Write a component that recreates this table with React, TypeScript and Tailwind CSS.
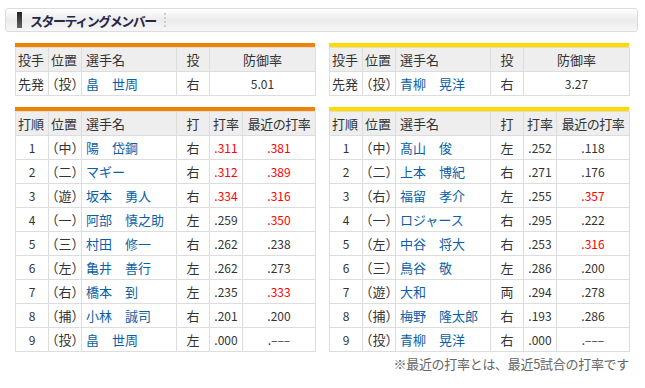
import React from "react";

type Pitcher = { role: string; pos: string; name: string; hand: string; era: string };
type Batter = { order: number; pos: string; name: string; hand: string; avg: string; recent: string; avgHot?: boolean; recentHot?: boolean };

const teams: { color: string; pitcher: Pitcher; lineup: Batter[] }[] = [
  {
    color: "bg-[#f08300]",
    pitcher: { role: "先発", pos: "（投）", name: "畠　世周", hand: "右", era: "5.01" },
    lineup: [
      { order: 1, pos: "（中）", name: "陽　岱鋼", hand: "右", avg: ".311", recent: ".381", avgHot: true, recentHot: true },
      { order: 2, pos: "（二）", name: "マギー", hand: "右", avg: ".312", recent: ".389", avgHot: true, recentHot: true },
      { order: 3, pos: "（遊）", name: "坂本　勇人", hand: "右", avg: ".334", recent: ".316", avgHot: true, recentHot: true },
      { order: 4, pos: "（一）", name: "阿部　慎之助", hand: "左", avg: ".259", recent: ".350", recentHot: true },
      { order: 5, pos: "（三）", name: "村田　修一", hand: "右", avg: ".262", recent: ".238" },
      { order: 6, pos: "（左）", name: "亀井　善行", hand: "左", avg: ".262", recent: ".273" },
      { order: 7, pos: "（右）", name: "橋本　到", hand: "左", avg: ".235", recent: ".333", recentHot: true },
      { order: 8, pos: "（捕）", name: "小林　誠司", hand: "右", avg: ".201", recent: ".200" },
      { order: 9, pos: "（投）", name: "畠　世周", hand: "左", avg: ".000", recent: ".‒‒‒" },
    ],
  },
  {
    color: "bg-[#ffdc00]",
    pitcher: { role: "先発", pos: "（投）", name: "青柳　晃洋", hand: "右", era: "3.27" },
    lineup: [
      { order: 1, pos: "（中）", name: "髙山　俊", hand: "左", avg: ".252", recent: ".118" },
      { order: 2, pos: "（二）", name: "上本　博紀", hand: "右", avg: ".271", recent: ".176" },
      { order: 3, pos: "（右）", name: "福留　孝介", hand: "左", avg: ".255", recent: ".357", recentHot: true },
      { order: 4, pos: "（一）", name: "ロジャース", hand: "右", avg: ".295", recent: ".222" },
      { order: 5, pos: "（左）", name: "中谷　将大", hand: "右", avg: ".253", recent: ".316", recentHot: true },
      { order: 6, pos: "（三）", name: "鳥谷　敬", hand: "左", avg: ".286", recent: ".200" },
      { order: 7, pos: "（遊）", name: "大和", hand: "両", avg: ".294", recent: ".278" },
      { order: 8, pos: "（捕）", name: "梅野　隆太郎", hand: "右", avg: ".193", recent: ".286" },
      { order: 9, pos: "（投）", name: "青柳　晃洋", hand: "右", avg: ".000", recent: ".‒‒‒" },
    ],
  },
];

const th = "h-[24px] border border-[#dddddd] bg-[#eeeeee] font-normal p-0";
const td = "h-[24px] border border-[#dddddd] bg-white p-0";
// half-width parentheses like the original's proportional gothic
const posCell = `${td} pl-[3px] [font-feature-settings:'halt']`;

function PitcherTable({ color, p }: { color: string; p: Pitcher }) {
  return (
    <div className="w-[300px]">
      <div className={`h-[4px] ${color}`} />
      <table className="w-[300px] table-fixed border-collapse">
        <colgroup>
          <col className="w-[33px]" />
          <col className="w-[33px]" />
          <col className="w-[95px]" />
          <col className="w-[33px]" />
          <col className="w-[106px]" />
        </colgroup>
        <thead>
          <tr>
            <th className={`${th} text-left pl-[2px]`}>投手</th>
            <th className={`${th} text-left pl-[2px]`}>位置</th>
            <th className={`${th} text-left pl-[4px]`}>選手名</th>
            <th className={`${th} text-center`}>投</th>
            <th className={`${th} text-center`}>防御率</th>
          </tr>
        </thead>
        <tbody>
          <tr>
            <td className={`${td} pl-[2px]`}>{p.role}</td>
            <td className={posCell}>{p.pos}</td>
            <td className={`${td} pl-[4px] text-[#0b5fa5] whitespace-nowrap`}>{p.name}</td>
            <td className={`${td} text-center`}>{p.hand}</td>
            <td className={`${td} text-center text-[12px]`}>{p.era}</td>
          </tr>
        </tbody>
      </table>
    </div>
  );
}

function LineupTable({ color, rows }: { color: string; rows: Batter[] }) {
  return (
    <div className="w-[300px]">
      <div className={`h-[4px] ${color}`} />
      <table className="w-[300px] table-fixed border-collapse">
        <colgroup>
          <col className="w-[33px]" />
          <col className="w-[33px]" />
          <col className="w-[95px]" />
          <col className="w-[33px]" />
          <col className="w-[33px]" />
          <col className="w-[73px]" />
        </colgroup>
        <thead>
          <tr>
            <th className={`${th} text-left pl-[2px]`}>打順</th>
            <th className={`${th} text-left pl-[2px]`}>位置</th>
            <th className={`${th} text-left pl-[4px]`}>選手名</th>
            <th className={`${th} text-center`}>打</th>
            <th className={`${th} text-center`}>打率</th>
            <th className={`${th} text-center tracking-[-0.5px]`}>最近の打率</th>
          </tr>
        </thead>
        <tbody>
          {rows.map((r) => (
            <tr key={r.order}>
              <td className={`${td} text-center text-[12px]`}>{r.order}</td>
              <td className={posCell}>{r.pos}</td>
              <td className={`${td} pl-[4px] text-[#0b5fa5] whitespace-nowrap`}>{r.name}</td>
              <td className={`${td} text-center`}>{r.hand}</td>
              <td className={`${td} text-center text-[12px] ${r.avgHot ? "text-[#ff0000]" : ""}`}>{r.avg}</td>
              <td className={`${td} text-center text-[12px] ${r.recentHot ? "text-[#ff0000]" : ""}`}>{r.recent}</td>
            </tr>
          ))}
        </tbody>
      </table>
    </div>
  );
}

export default function App() {
  return (
    <div
      className="w-[645px] h-[388px] bg-white text-[13px] text-[#333333] leading-none"
      style={{ fontFamily: '"Noto Sans CJK JP", "Noto Sans", sans-serif' }}
    >
      <div className="pt-[8px] pl-[5px] pr-[7px]">
        {/* Section heading */}
        <div className="h-[24px] border border-[#dddddd] rounded-[3px] bg-gradient-to-b from-[#ffffff] via-[#ebebeb] to-[#f6f6f6] flex items-center pl-[11px]">
          <div className="w-[5px] h-[16px] bg-gradient-to-b from-[#222222] to-[#666666]" />
          <span className="ml-[8px] text-[13px] font-bold tracking-[-1.5px] text-[#262646]">スターティングメンバー</span>
          <span className="ml-[8px] h-[14px] border-l-2 border-dotted border-[#cccccc]" />
        </div>

        {/* Tables */}
        <div className="pl-[10px] pt-[11px] w-[624px]">
          <div className="flex gap-[14px]">
            <PitcherTable color={teams[0].color} p={teams[0].pitcher} />
            <PitcherTable color={teams[1].color} p={teams[1].pitcher} />
          </div>
          <div className="flex gap-[14px] mt-[11px]">
            <LineupTable color={teams[0].color} rows={teams[0].lineup} />
            <LineupTable color={teams[1].color} rows={teams[1].lineup} />
          </div>
          <p className="text-right text-[13px] text-[#666666] mt-[5px] tracking-[-0.3px]">
            ※最近の打率とは、最近5試合の打率です
          </p>
        </div>
      </div>
    </div>
  );
}
